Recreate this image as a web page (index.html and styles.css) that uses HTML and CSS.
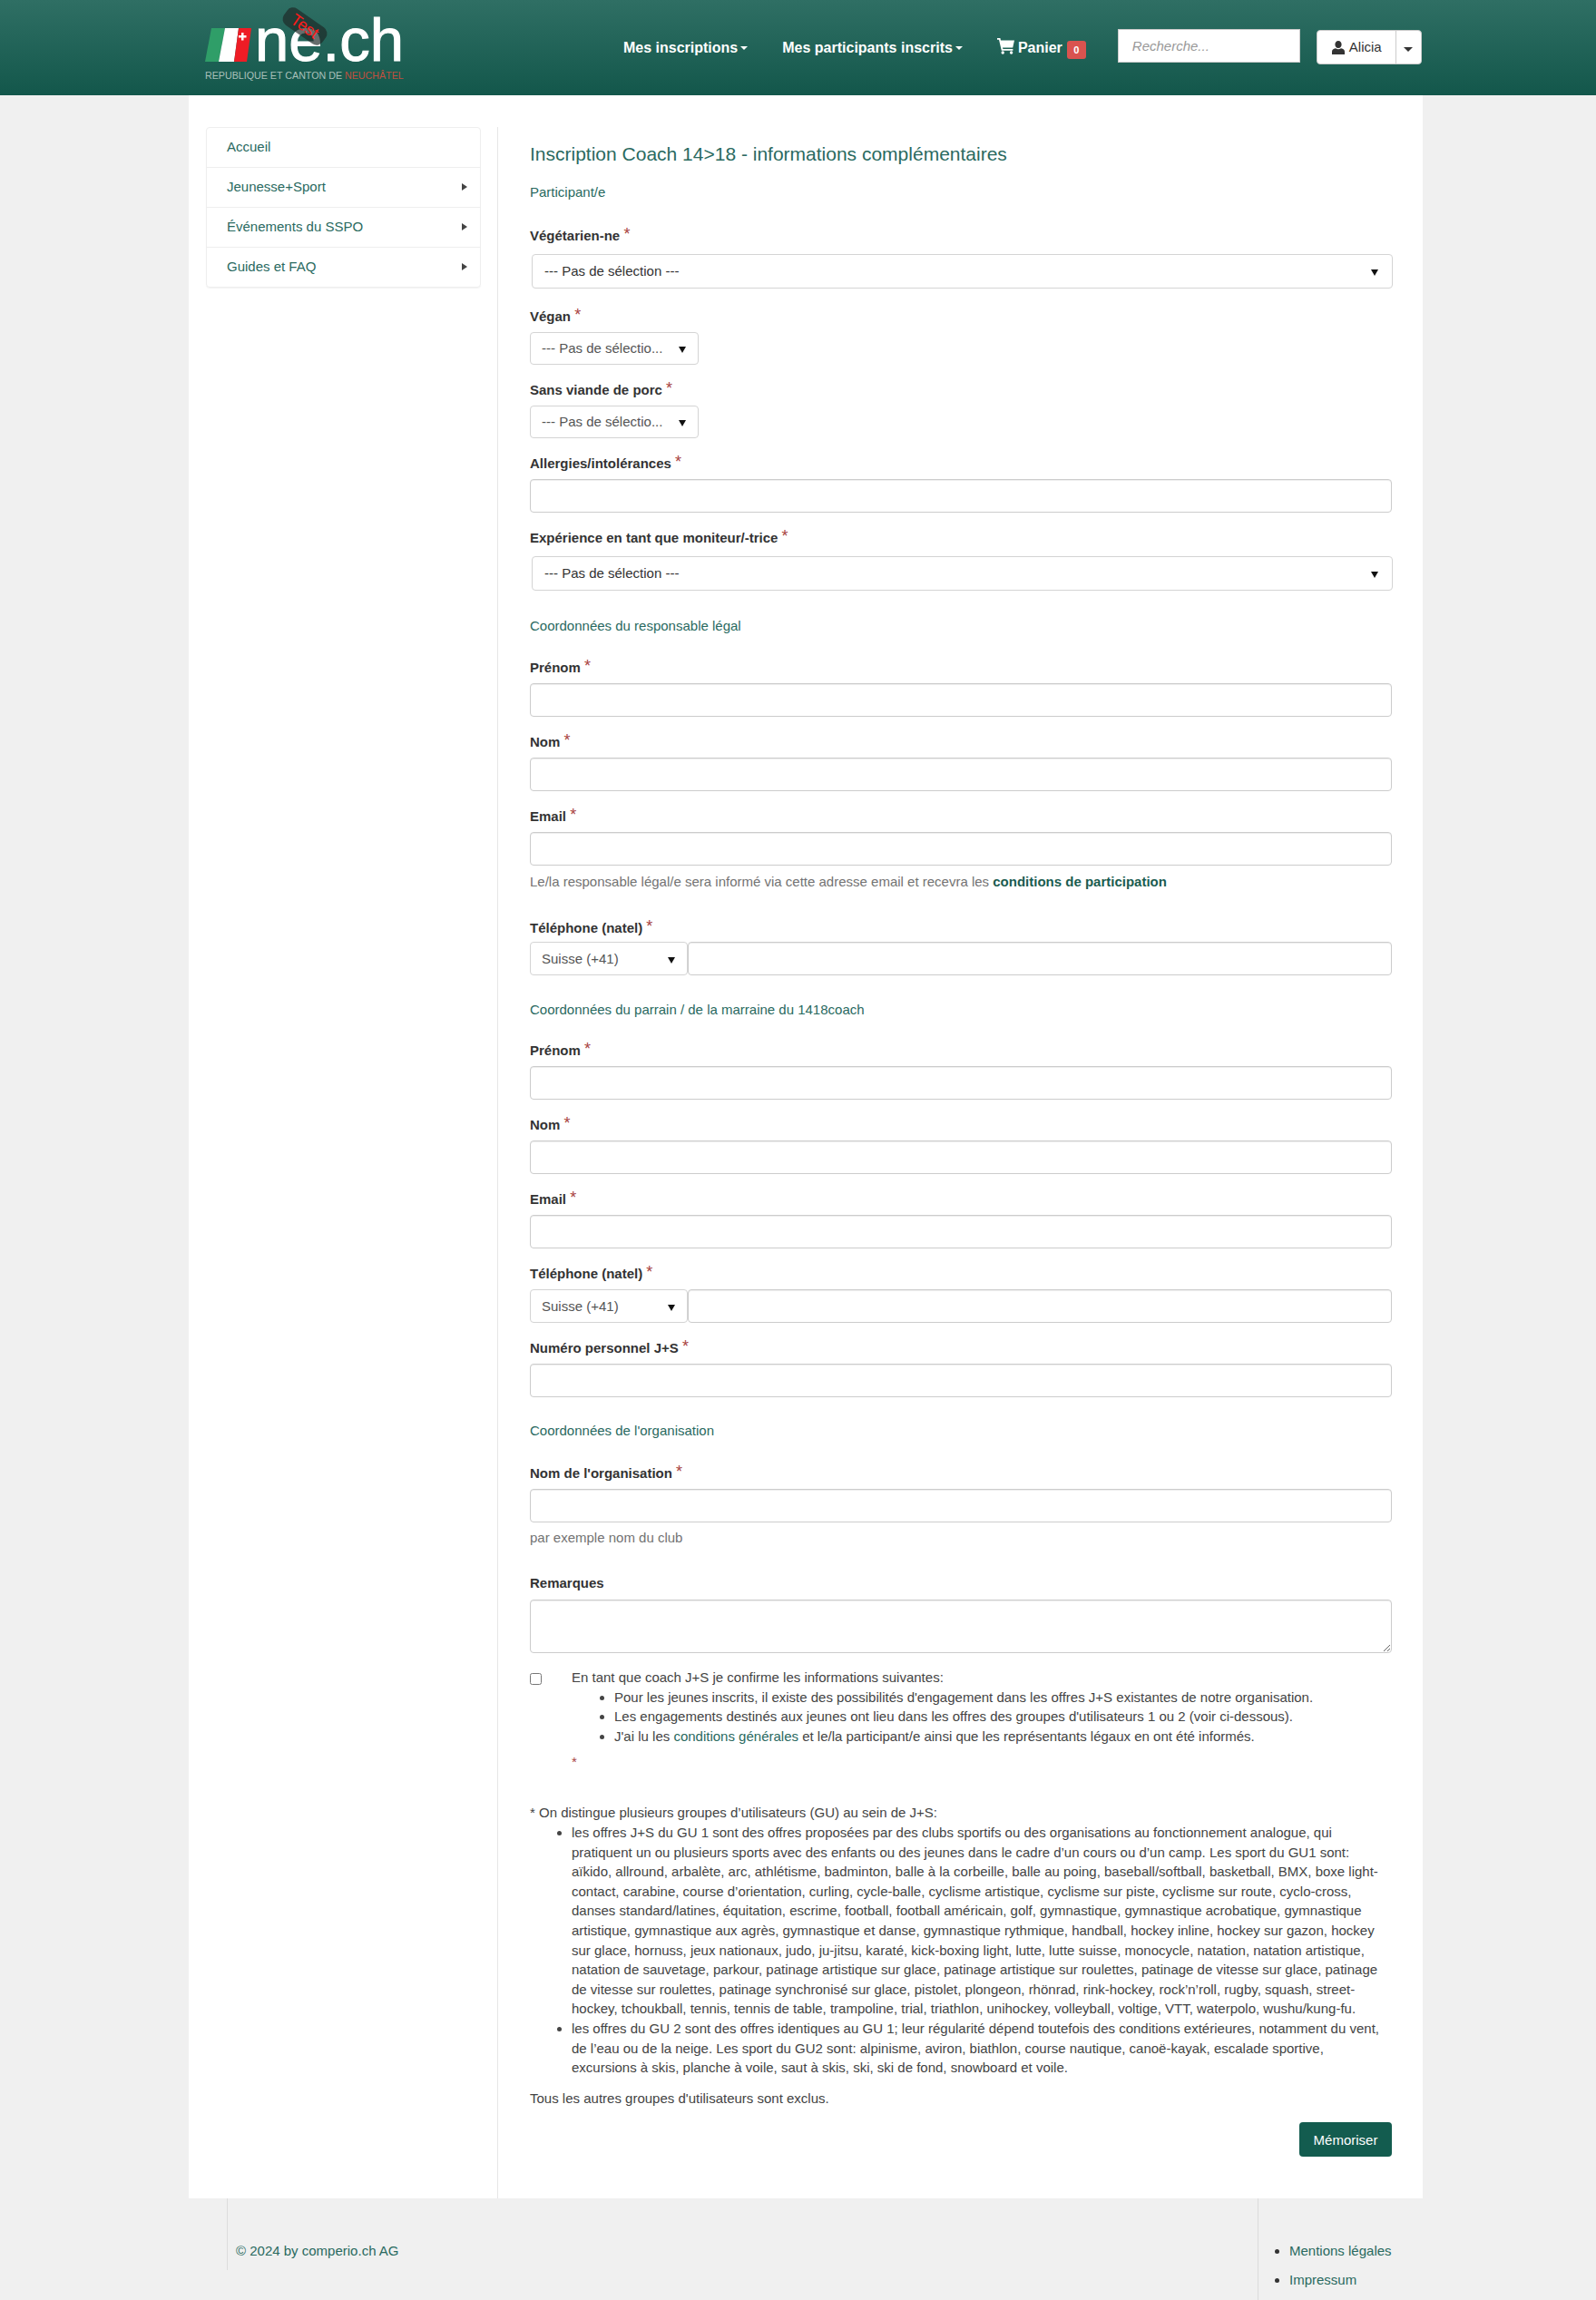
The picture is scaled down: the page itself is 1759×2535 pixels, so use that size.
FILE: index.html
```html
<!DOCTYPE html>
<html lang="fr">
<head>
<meta charset="utf-8">
<title>Inscription Coach 14>18</title>
<link rel="stylesheet" href="styles.css">
</head>
<body>
<header class="topbar">
  <div class="topbar-inner">
    <a class="logo" href="#">
      <span class="logo-mark">
        <svg class="flag" width="52" height="37" viewBox="0 0 52 37"><polygon points="0,37 7,0 22,0 15,37" fill="#2f9e68"/><polygon points="15,37 22,0 37,0 32,37" fill="#fff"/><polygon points="32,37 37,0 51,0 46,37" fill="#ee1c25"/><path d="M40 5h2.500v3h3v2.500h-3v3H40v-3h-3V8h3z" fill="#fff"/></svg>
        <span class="logo-word">ne.ch</span>
      </span>
      <span class="logo-sub">REPUBLIQUE ET CANTON DE <span class="logo-red">NEUCHÂTEL</span></span>
      <span class="test-badge">Test</span>
    </a>
    <nav class="mainnav">
      <a href="#">Mes inscriptions<i class="caret"></i></a>
      <a href="#">Mes participants inscrits<i class="caret"></i></a>
      <a href="#" class="cart"><svg width="19" height="18" viewBox="0 0 19 18"><path d="M0 0h3.400l.6 2.400H19l-1.800 8H6l.4 1.600h11v1.800H4.800L2 1.800H0z" fill="#fff"/><circle cx="6.200" cy="16" r="1.700" fill="#fff"/><circle cx="15.600" cy="16" r="1.700" fill="#fff"/></svg>Panier<span class="badge">0</span></a>
    </nav>
    <input class="search" type="text" placeholder="Recherche...">
    <div class="userbtn">
      <span class="userbtn-main"><svg width="14" height="15" viewBox="0 0 14 15"><path d="M7 0c2.200 0 3.600 1.700 3.600 4S9.400 8 7 8 3.400 6.300 3.400 4 4.800 0 7 0zM4 8.300C5 9 6 9.300 7 9.300s2-.3 3-1c2.500.5 4 1.700 4 3.700v3H0v-3c0-2 1.500-3.200 4-3.700z" fill="#333"/></svg>Alicia</span>
      <span class="userbtn-caret"><i class="caret caret-dark"></i></span>
    </div>
  </div>
</header>

<main class="page">
  <aside class="sidebar">
    <ul class="sidemenu">
      <li><a href="#">Accueil</a></li>
      <li><a href="#">Jeunesse+Sport<i class="arrow"></i></a></li>
      <li><a href="#">Événements du SSPO<i class="arrow"></i></a></li>
      <li><a href="#">Guides et FAQ<i class="arrow"></i></a></li>
    </ul>
  </aside>
  <section class="content">
    <h1 class="title">Inscription Coach 14&gt;18 - informations complémentaires</h1>
    <h2 class="section section-first">Participant/e</h2>

    <div class="field field-first"><label class="label">Végétarien-ne <span class="req">*</span></label>
      <div class="pick pick-wide"><span class="pick-text">--- Pas de sélection ---</span></div></div>
    <div class="field"><label class="label">Végan <span class="req">*</span></label>
      <div class="pick pick-small"><span class="pick-text">--- Pas de sélectio...</span></div></div>
    <div class="field"><label class="label">Sans viande de porc <span class="req">*</span></label>
      <div class="pick pick-small"><span class="pick-text">--- Pas de sélectio...</span></div></div>
    <div class="field"><label class="label">Allergies/intolérances <span class="req">*</span></label>
      <input class="input" type="text"></div>
    <div class="field"><label class="label">Expérience en tant que moniteur/-trice <span class="req">*</span></label>
      <div class="pick pick-wide"><span class="pick-text">--- Pas de sélection ---</span></div></div>

    <h2 class="section section-legal">Coordonnées du responsable légal</h2>
    <div class="field"><label class="label">Prénom <span class="req">*</span></label><input class="input" type="text"></div>
    <div class="field"><label class="label">Nom <span class="req">*</span></label><input class="input" type="text"></div>
    <div class="field field-help"><label class="label">Email <span class="req">*</span></label><input class="input" type="text">
      <p class="help">Le/la responsable légal/e sera informé via cette adresse email et recevra les <a class="strong-link" href="#">conditions de participation</a></p></div>
    <div class="field field-phone"><label class="label">Téléphone (natel) <span class="req">*</span></label>
      <div class="phone"><div class="pick pick-phone"><span class="pick-text">Suisse (+41)</span></div><input class="input" type="text"></div></div>

    <h2 class="section section-tight">Coordonnées du parrain / de la marraine du 1418coach</h2>
    <div class="field"><label class="label">Prénom <span class="req">*</span></label><input class="input" type="text"></div>
    <div class="field"><label class="label">Nom <span class="req">*</span></label><input class="input" type="text"></div>
    <div class="field"><label class="label">Email <span class="req">*</span></label><input class="input" type="text"></div>
    <div class="field"><label class="label">Téléphone (natel) <span class="req">*</span></label>
      <div class="phone"><div class="pick pick-phone"><span class="pick-text">Suisse (+41)</span></div><input class="input" type="text"></div></div>
    <div class="field"><label class="label">Numéro personnel J+S <span class="req">*</span></label><input class="input" type="text"></div>

    <h2 class="section section-org">Coordonnées de l'organisation</h2>
    <div class="field field-help"><label class="label">Nom de l'organisation <span class="req">*</span></label><input class="input" type="text">
      <p class="help help-tight">par exemple nom du club</p></div>
    <div class="field field-remarks"><label class="label">Remarques</label><textarea class="textarea"></textarea></div>

    <div class="confirm">
      <input class="check" type="checkbox">
      <div class="confirm-body">
        <p class="confirm-lead">En tant que coach J+S je confirme les informations suivantes:</p>
        <ul class="confirm-list">
          <li>Pour les jeunes inscrits, il existe des possibilités d'engagement dans les offres J+S existantes de notre organisation.</li>
          <li>Les engagements destinés aux jeunes ont lieu dans les offres des groupes d'utilisateurs 1 ou 2 (voir ci-dessous).</li>
          <li>J'ai lu les <a class="link" href="#">conditions générales</a> et le/la participant/e ainsi que les représentants légaux en ont été informés.</li>
        </ul>
        <span class="req req-solo">*</span>
      </div>
    </div>

    <div class="notes">
      <p class="notes-lead">* On distingue plusieurs groupes d’utilisateurs (GU) au sein de J+S:</p>
      <ul class="notes-list">
        <li>les offres J+S du GU 1 sont des offres proposées par des clubs sportifs ou des organisations au fonctionnement analogue, qui pratiquent un ou plusieurs sports avec des enfants ou des jeunes dans le cadre d’un cours ou d’un camp. Les sport du GU1 sont: aïkido, allround, arbalète, arc, athlétisme, badminton, balle à la corbeille, balle au poing, baseball/softball, basketball, BMX, boxe light-contact, carabine, course d’orientation, curling, cycle-balle, cyclisme artistique, cyclisme sur piste, cyclisme sur route, cyclo-cross, danses standard/latines, équitation, escrime, football, football américain, golf, gymnastique, gymnastique acrobatique, gymnastique artistique, gymnastique aux agrès, gymnastique et danse, gymnastique rythmique, handball, hockey inline, hockey sur gazon, hockey sur glace, hornuss, jeux nationaux, judo, ju-jitsu, karaté, kick-boxing light, lutte, lutte suisse, monocycle, natation, natation artistique, natation de sauvetage, parkour, patinage artistique sur glace, patinage artistique sur roulettes, patinage de vitesse sur glace, patinage de vitesse sur roulettes, patinage synchronisé sur glace, pistolet, plongeon, rhönrad, rink-hockey, rock’n’roll, rugby, squash, street-hockey, tchoukball, tennis, tennis de table, trampoline, trial, triathlon, unihockey, volleyball, voltige, VTT, waterpolo, wushu/kung-fu.</li>
        <li>les offres du GU 2 sont des offres identiques au GU 1; leur régularité dépend toutefois des conditions extérieures, notamment du vent, de l’eau ou de la neige. Les sport du GU2 sont: alpinisme, aviron, biathlon, course nautique, canoë-kayak, escalade sportive, excursions à skis, planche à voile, saut à skis, ski, ski de fond, snowboard et voile.</li>
      </ul>
      <p class="notes-end">Tous les autres groupes d'utilisateurs sont exclus.</p>
    </div>

    <div class="actions"><button class="btn" type="button">Mémoriser</button></div>
  </section>
</main>

<footer class="footer">
  <div class="foot-left"><a class="foot-link" href="#">© 2024 by comperio.ch AG</a></div>
  <ul class="foot-right">
    <li><a class="foot-link" href="#">Mentions légales</a></li>
    <li><a class="foot-link" href="#">Impressum</a></li>
  </ul>
</footer>
</body>
</html>
```

FILE: styles.css
```css
* { box-sizing: border-box; }
html, body { margin: 0; padding: 0; }
body {
  background: #f0f0f0;
  color: #333;
  font-family: "Liberation Sans", Arial, sans-serif;
  font-size: 15px;
  line-height: 20px;
}
a { color: #2a6a5f; text-decoration: none; }
ul { margin: 0; padding: 0; }
p { margin: 0; }

/* Top bar */
.topbar {
  height: 105px;
  background: linear-gradient(to bottom, #2f6f64, #13574b);
}
.topbar-inner {
  margin-left: 208px;
  width: 1360px;
  height: 105px;
  display: flex;
  align-items: flex-start;
}
.logo {
  position: relative;
  display: block;
  flex: none;
  margin-left: 18px;
  margin-top: 18px;
  width: 222px;
}
.logo-mark { display: flex; align-items: flex-end; height: 50px; }
.flag { display: block; flex: none; }
.logo-word {
  color: #fff;
  font-size: 67px;
  line-height: 52px;
  height: 50px;
  margin-left: 3px;
  -webkit-text-stroke: 1px #fff;
}
.logo-sub {
  display: block;
  margin-top: 7px;
  color: #a9c0ba;
  font-size: 10.700px;
  line-height: 16px;
  white-space: nowrap;
}
.logo-red { color: #c0503f; }
.test-badge {
  position: absolute;
  left: 84px;
  top: 0;
  width: 52px;
  height: 22px;
  border-radius: 8px;
  background: rgba(30, 40, 38, 0.68);
  color: #ff1a1a;
  font-size: 18px;
  line-height: 22px;
  text-align: center;
  transform: rotate(35deg);
}
.mainnav {
  flex: none;
  display: flex;
  margin-left: 239px;
  margin-top: 41px;
  gap: 38px;
  font-size: 16px;
  font-weight: 700;
}
.mainnav a { color: #fff; display: flex; align-items: center; white-space: nowrap; }
.caret {
  display: inline-block;
  width: 0;
  height: 0;
  margin-left: 3px;
  border-left: 4px solid transparent;
  border-right: 4px solid transparent;
  border-top: 4px solid #fff;
}
.caret-dark {
  margin-left: 0;
  border-left-width: 5px;
  border-right-width: 5px;
  border-top: 5px solid #333;
}
.cart svg { margin-right: 4px; margin-top: -4px; }
.badge {
  display: block;
  width: 21px;
  height: 20px;
  margin-left: 5px;
  margin-top: 4px;
  border-radius: 3px;
  background: #d9534f;
  color: #fff;
  font-size: 11px;
  line-height: 20px;
  text-align: center;
}
.search {
  flex: none;
  width: 201px;
  height: 37px;
  margin-left: 35px;
  margin-top: 32px;
  padding: 0 15px;
  border: 1px solid #ccc;
  background: #fff;
  font: italic 15px "Liberation Sans", Arial, sans-serif;
}
.search::placeholder { color: #999; opacity: 1; }
.userbtn {
  flex: none;
  display: flex;
  width: 116px;
  height: 38px;
  margin-left: 18px;
  margin-top: 33px;
  background: #fff;
  border: 1px solid #ccc;
  border-radius: 4px;
}
.userbtn-main {
  width: 87px;
  display: flex;
  align-items: center;
  padding-left: 16px;
  gap: 5px;
  border-right: 1px solid #ccc;
}
.userbtn-caret {
  flex: 1;
  display: flex;
  align-items: center;
  justify-content: center;
  padding-top: 4px;
}

/* Page */
.page {
  margin-left: 208px;
  width: 1360px;
  height: 2318px;
  padding: 35px 19px 0;
  background: #fff;
  display: flex;
  align-items: stretch;
}
.sidebar {
  width: 303px;
  flex: none;
}
.sidemenu {
  list-style: none;
  border: 1px solid #eee;
  border-radius: 4px;
  box-shadow: 0 1px 1px rgba(0, 0, 0, 0.05);
}
.sidemenu li { border-bottom: 1px solid #eee; }
.sidemenu li:last-child { border-bottom: 0; }
.sidemenu a {
  display: flex;
  align-items: center;
  justify-content: space-between;
  height: 43px;
  padding: 0 14px 2px 22px;
}
.arrow {
  border-top: 4.500px solid transparent;
  border-bottom: 4.500px solid transparent;
  border-left: 6px solid #444;
}
.content {
  flex: none;
  width: 987px;
  margin-left: 18px;
  padding: 0 0 0 35px;
  border-left: 1px solid #e6e6e6;
}
.title {
  margin: 16px 0 0;
  font-size: 21px;
  line-height: 28px;
  font-weight: 400;
  color: #2a6a5f;
}
.section {
  margin: 29px 0 26px;
  font-size: 15px;
  line-height: 20px;
  font-weight: 400;
  color: #2a6a5f;
}
.section-first { margin: 18px 0 27px; }
.section-legal { margin: 29px 0 25px; }
.section-tight { margin: 28px 0 24px; }
.section-org { margin: 27px 0 26px; }
.field { margin-bottom: 17px; width: 950px; }
.field-first { margin-bottom: 20px; }
.label {
  display: block;
  height: 20px;
  margin-bottom: 8px;
  font-weight: 700;
  white-space: nowrap;
}
.field-phone .label { margin-bottom: 6px; }
.req { color: #a94442; font-size: 18px; font-weight: 400; position: relative; top: -1px; }
.input, .textarea {
  display: block;
  width: 100%;
  border: 1px solid #ccc;
  border-radius: 4px;
  box-shadow: inset 0 1px 1px rgba(0, 0, 0, 0.075);
  background: #fff;
  font: 15px "Liberation Sans", Arial, sans-serif;
}
.input { height: 37px; }
.textarea { height: 59px; resize: vertical; }
.pick {
  position: relative;
  display: flex;
  align-items: center;
  background: #fff;
  border: 1px solid #d4d4d4;
  border-radius: 4px;
  color: #555;
  white-space: nowrap;
}
.pick::after {
  content: "";
  position: absolute;
  right: 13px;
  top: 50%;
  margin-top: -2px;
  border-left: 4px solid transparent;
  border-right: 4px solid transparent;
  border-top: 7px solid #111;
}
.pick-wide {
  width: 949px;
  height: 38px;
  margin-left: 2px;
  margin-top: 11px;
  padding-left: 13px;
  color: #333;
}
.pick-wide::after { right: 15px; }
.pick-small { width: 186px; height: 36px; padding: 0 12px; }
.pick-phone { width: 174px; height: 37px; flex: none; padding: 0 12px; }
.phone { display: flex; }
.phone .input { flex: 1; min-width: 0; }
.help { margin-top: 8px; color: #737373; }
.help-tight { margin-top: 7px; }
.field-help { margin-bottom: 30px; }
.strong-link { font-weight: 700; color: #1a5c50; }
.field-remarks { margin-bottom: 22px; }

/* Confirmation */
.confirm { display: flex; width: 950px; }
.check { flex: none; width: 13px; height: 13px; margin: 0; }
.confirm-body { flex: 1; margin-left: 33px; line-height: 21.500px; color: #444; }
.confirm-lead { margin-top: -6px; }
.confirm-list { padding-left: 47px; }
.req-solo { display: block; margin-top: 7px; top: 0; font-size: 15px; }

/* Notes */
.notes { margin-top: 34px; width: 950px; line-height: 21.600px; color: #444; }
.notes-lead { margin-bottom: 1px; }
.notes-list { padding-left: 46px; }
.notes-end { margin-top: 12px; }
.actions { display: flex; justify-content: flex-end; width: 950px; margin-top: 16px; }
.btn {
  width: 102px;
  height: 38px;
  border: 0;
  border-radius: 4px;
  background: #135c4f;
  color: #fff;
  font: 15px "Liberation Sans", Arial, sans-serif;
}

/* Footer */
.footer {
  display: flex;
  justify-content: space-between;
  align-items: flex-start;
  margin-left: 250px;
  width: 1318px;
  height: 112px;
}
.foot-left {
  height: 79px;
  padding: 48px 0 0 9px;
  border-left: 1px solid #dcdcdc;
}
.foot-right {
  width: 182px;
  height: 112px;
  padding: 48px 0 0 34px;
  border-left: 1px solid #dcdcdc;
}
.foot-right li { margin-bottom: 12px; }
```
